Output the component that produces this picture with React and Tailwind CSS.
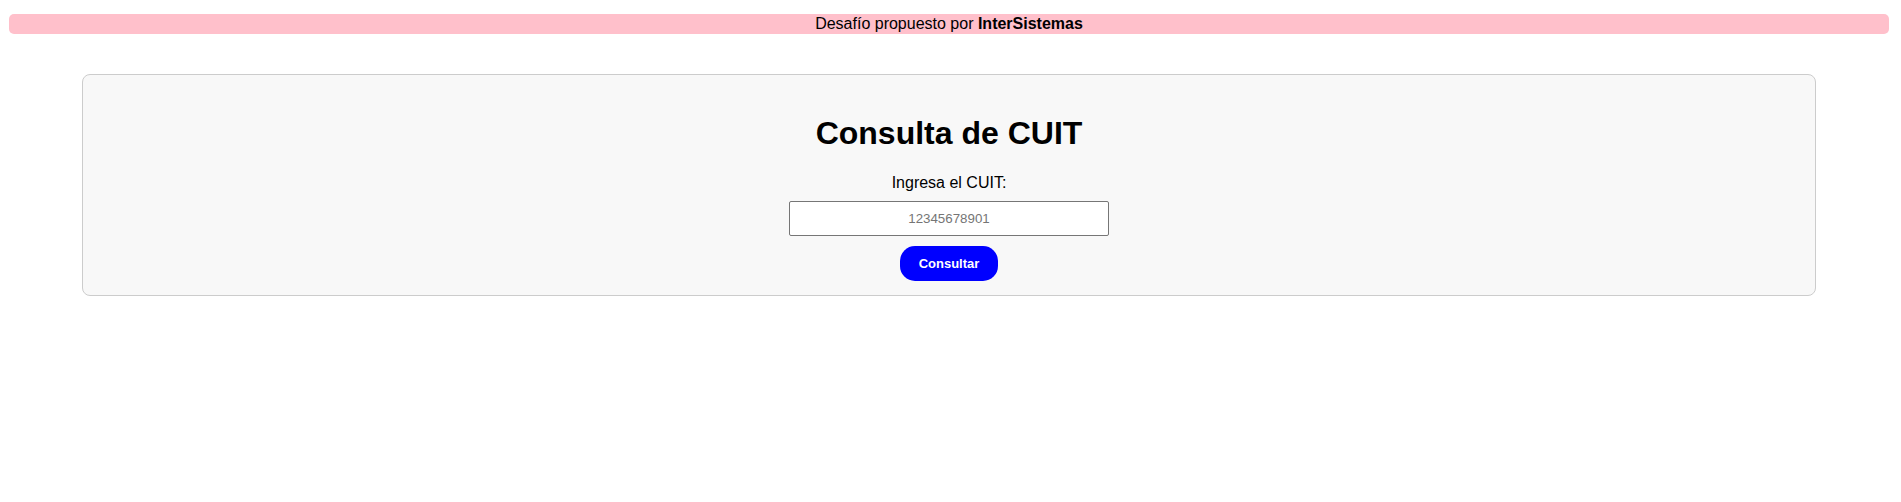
const App = () => {
  return (
    <div className="min-h-screen bg-white font-['Liberation_Sans',Arial,sans-serif] text-black">
      {/* Banner */}
      <div className="pt-[14px] pl-[9px] pr-[12px]">
        <div className="h-[20px] rounded-[5px] bg-[#ffc0cb] text-center text-base leading-[20px]">
          Desafío propuesto por <span className="font-bold">InterSistemas</span>
        </div>
      </div>

      {/* Card */}
      <div className="mt-[40px] ml-[82px] w-[1734px] rounded-[8px] border border-[#cccccc] bg-[#f8f8f8] pt-[40px] pb-[14px] flex flex-col items-center">
        <h1 className="text-[32px] leading-[37px] font-bold">Consulta de CUIT</h1>
        <label htmlFor="cuit" className="mt-[22px] text-base leading-[18px]">
          Ingresa el CUIT:
        </label>
        <input
          id="cuit"
          type="text"
          placeholder="12345678901"
          className="mt-[9px] w-[320px] h-[35px] rounded-[2px] border border-[#767676] bg-white text-center text-[13.33px] placeholder:text-[#757575] outline-none"
        />
        <button className="mt-[10px] w-[98px] h-[35px] rounded-[15px] bg-[#0000ff] text-white font-bold text-[13px]">
          Consultar
        </button>
      </div>
    </div>
  );
};

export default App;
